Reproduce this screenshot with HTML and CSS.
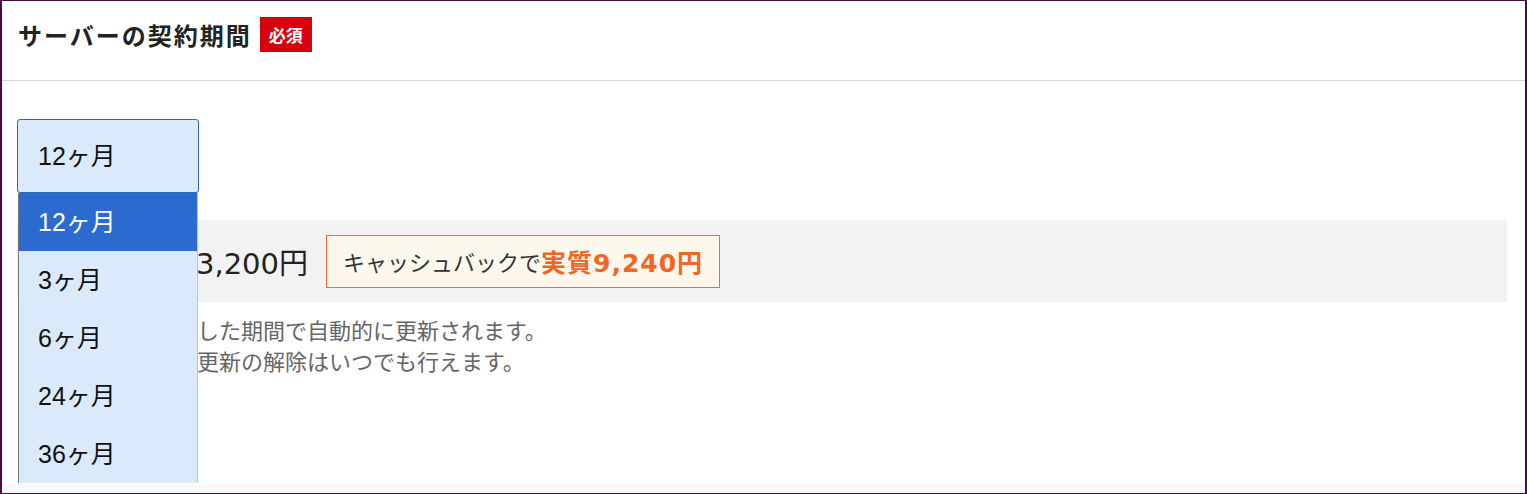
FILE: index.html
```html
<!DOCTYPE html>
<html lang="ja">
<head>
  <meta charset="UTF-8">
  <meta name="viewport" content="width=device-width, initial-scale=1.0">
  <title>サーバーの契約期間</title>
  <link rel="stylesheet" href="styles.css">
</head>
<body>
  <div class="frame">
    <div class="header">
      <h2>サーバーの契約期間</h2>
      <span class="required">必須</span>
    </div>

    <div class="content">
      <div class="picker">
        <div class="select">12ヶ月</div>
        <ul class="options">
          <li class="selected">12ヶ月</li>
          <li>3ヶ月</li>
          <li>6ヶ月</li>
          <li>24ヶ月</li>
          <li>36ヶ月</li>
        </ul>
      </div>

      <div class="price-band">
        <span class="price">3,200円</span>
        <div class="cashback">キャッシュバックで<strong>実質9,240円</strong></div>
      </div>

      <div class="notes">
        <p>した期間で自動的に更新されます。</p>
        <p>更新の解除はいつでも行えます。</p>
      </div>
    </div>

    <div class="footer"></div>
  </div>
</body>
</html>
```

FILE: styles.css
```css
* {
  margin: 0;
  padding: 0;
  box-sizing: border-box;
}

body {
  background: #fff;
  font-family: "DejaVu Sans", "Noto Sans CJK JP", sans-serif;
  color: #222;
}

.frame {
  height: 494px;
  border: 1px solid #4a0a48;
  border-left-width: 2px;
  border-right-width: 2px;
  display: flex;
  flex-direction: column;
  overflow: hidden;
}

.header {
  height: 80px;
  border-bottom: 1px solid #d2d2d2;
  display: flex;
  align-items: center;
  padding: 0 16px 13px;
  gap: 8px;
}

.header h2 {
  font-family: "Noto Sans CJK JP", sans-serif;
  font-size: 24px;
  font-weight: 700;
  letter-spacing: 2px;
  color: #222;
}

.required {
  background: #d7000f;
  color: #fff;
  font-family: "Noto Sans CJK JP", sans-serif;
  font-weight: 700;
  font-size: 17px;
  line-height: 35px;
  padding: 0 9px;
}

.content {
  flex: 1;
  padding: 38px 18px 0 15px;
}

.picker {
  position: relative;
  width: 182px;
}

.select {
  height: 74px;
  border: 1px solid #2f6aa8;
  border-radius: 3px;
  background: #dbeafb;
  font-family: "Liberation Sans", "Noto Sans CJK JP", sans-serif;
  font-size: 25px;
  line-height: 72px;
  padding-left: 20px;
  color: #111;
}

.options {
  position: absolute;
  top: 74px;
  left: 1px;
  width: 180px;
  list-style: none;
  background: #dbeafb;
  border-left: 1px solid #767676;
  border-right: 1px solid #a9c6e4;
  z-index: 2;
}

.options li {
  height: 58px;
  line-height: 58px;
  padding-left: 19px;
  font-family: "Liberation Sans", "Noto Sans CJK JP", sans-serif;
  font-size: 25px;
  color: #111;
}

.options li.selected {
  background: #2b6bcf;
  color: #fff;
}

.price-band {
  margin-top: 27px;
  height: 82px;
  background: #f2f2f2;
  display: flex;
  align-items: center;
  padding-left: 179px;
}

.price {
  font-size: 29px;
  color: #222;
  margin-right: 18px;
}

.cashback {
  height: 53px;
  border: 1px solid #f0702a;
  background: #fcf8ee;
  display: flex;
  align-items: center;
  padding: 0 16px;
  font-family: "Noto Sans CJK JP", sans-serif;
  font-size: 22px;
  color: #333;
}

.cashback strong {
  font-family: "DejaVu Sans", "Noto Sans CJK JP", sans-serif;
  font-size: 25px;
  font-weight: 700;
  letter-spacing: 1px;
  color: #f26522;
}

.notes {
  margin-top: 12px;
  padding-left: 180px;
  font-family: "Noto Sans CJK JP", sans-serif;
  font-size: 22px;
  line-height: 31px;
  color: #666;
}

.footer {
  height: 9px;
  background: #f8f8f8;
}
```
